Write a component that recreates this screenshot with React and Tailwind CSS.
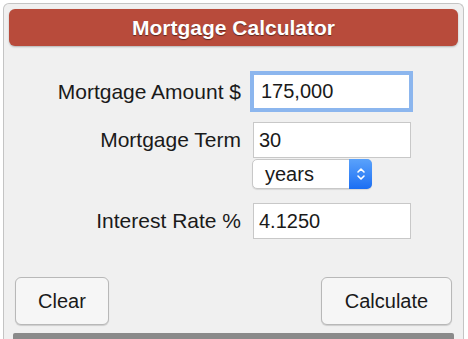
import React, { useState } from "react";

const App = () => {
  const [amount, setAmount] = useState("175,000");
  const [term, setTerm] = useState("30");
  const [unit, setUnit] = useState("years");
  const [rate, setRate] = useState("4.1250");

  const inputClass =
    "w-[158px] h-[36px] px-[5px] bg-white border border-[#c8c8c8] text-[20px] text-[#1a1a1a] focus:outline-none";

  return (
    <div
      className="w-[468px] h-[339px] bg-white pt-[3px] pl-[3px] pr-[4px] overflow-hidden"
      style={{ fontFamily: '"Liberation Sans", Arial, sans-serif' }}
    >
      <div className="h-[336px] bg-[#f0f0f0] border-t border-l border-r border-[#c4c4c4] rounded-t-[6px] pt-[5px] px-[5px] flex flex-col">
        {/* Header */}
        <div className="h-[38px] bg-[#b84b3b] rounded-[6px] flex items-center justify-center shadow-[0_1px_2px_rgba(0,0,0,0.25)]">
          <h1 className="text-white font-bold text-[21px] [text-shadow:0_1px_1px_rgba(0,0,0,0.5)]">
            Mortgage Calculator
          </h1>
        </div>

        {/* Form */}
        <div className="flex flex-col mt-[25px]">
          <div className="flex items-center">
            <label className="w-[232px] text-right text-[21px] text-[#1a1a1a]">
              Mortgage Amount $
            </label>
            <input
              value={amount}
              onChange={(e) => setAmount(e.target.value)}
              className="ml-[9px] w-[163px] h-[41px] px-[7px] bg-white border-[4px] border-[#8cb6ee] text-[20px] text-[#1a1a1a] focus:outline-none"
            />
          </div>

          <div className="flex items-start mt-[10px]">
            <label className="w-[232px] text-right text-[21px] text-[#1a1a1a] leading-[36px]">
              Mortgage Term
            </label>
            <div className="ml-[12px] flex flex-col">
              <input
                value={term}
                onChange={(e) => setTerm(e.target.value)}
                className={inputClass}
              />
              <div className="relative mt-[1px] -ml-[1px] w-[120px] h-[30px] bg-white border border-[#c8c8c8] rounded-[5px] flex items-center shadow-[0_1px_1px_rgba(0,0,0,0.1)]">
                <span className="pl-[12px] text-[20px] text-[#1a1a1a]">{unit}</span>
                <div className="absolute right-[-1px] top-[-1px] w-[23px] h-[30px] rounded-r-[5px] bg-gradient-to-b from-[#5aa2fb] to-[#1a6ef3] flex items-center justify-center">
                  <svg width="10" height="16" viewBox="0 0 10 16" fill="none" stroke="white" strokeWidth="1.6" strokeLinecap="round" strokeLinejoin="round">
                    <path d="M2 6 L5 3 L8 6" />
                    <path d="M2 10 L5 13 L8 10" />
                  </svg>
                </div>
                <select
                  value={unit}
                  onChange={(e) => setUnit(e.target.value)}
                  className="absolute inset-0 opacity-0"
                >
                  <option value="years">years</option>
                  <option value="months">months</option>
                </select>
              </div>
            </div>
          </div>

          <div className="flex items-center mt-[14px]">
            <label className="w-[232px] text-right text-[21px] text-[#1a1a1a]">
              Interest Rate %
            </label>
            <input
              value={rate}
              onChange={(e) => setRate(e.target.value)}
              className={`ml-[12px] ${inputClass}`}
            />
          </div>
        </div>

        {/* Buttons */}
        <div className="flex justify-between mt-[38px] px-[6px]">
          <button className="w-[94px] h-[48px] bg-[#f6f6f6] border border-[#b8b8b8] rounded-[6px] text-[20px] text-[#1a1a1a] shadow-[0_1px_1px_rgba(0,0,0,0.15)]">
            Clear
          </button>
          <button className="w-[131px] h-[48px] bg-[#f6f6f6] border border-[#b8b8b8] rounded-[6px] text-[20px] text-[#1a1a1a] shadow-[0_1px_1px_rgba(0,0,0,0.15)]">
            Calculate
          </button>
        </div>

        <div className="mt-[8px] mx-[4px] h-[6px] bg-[#8a8a8a] rounded-t-[2px]" />
      </div>
    </div>
  );
};

export default App;
